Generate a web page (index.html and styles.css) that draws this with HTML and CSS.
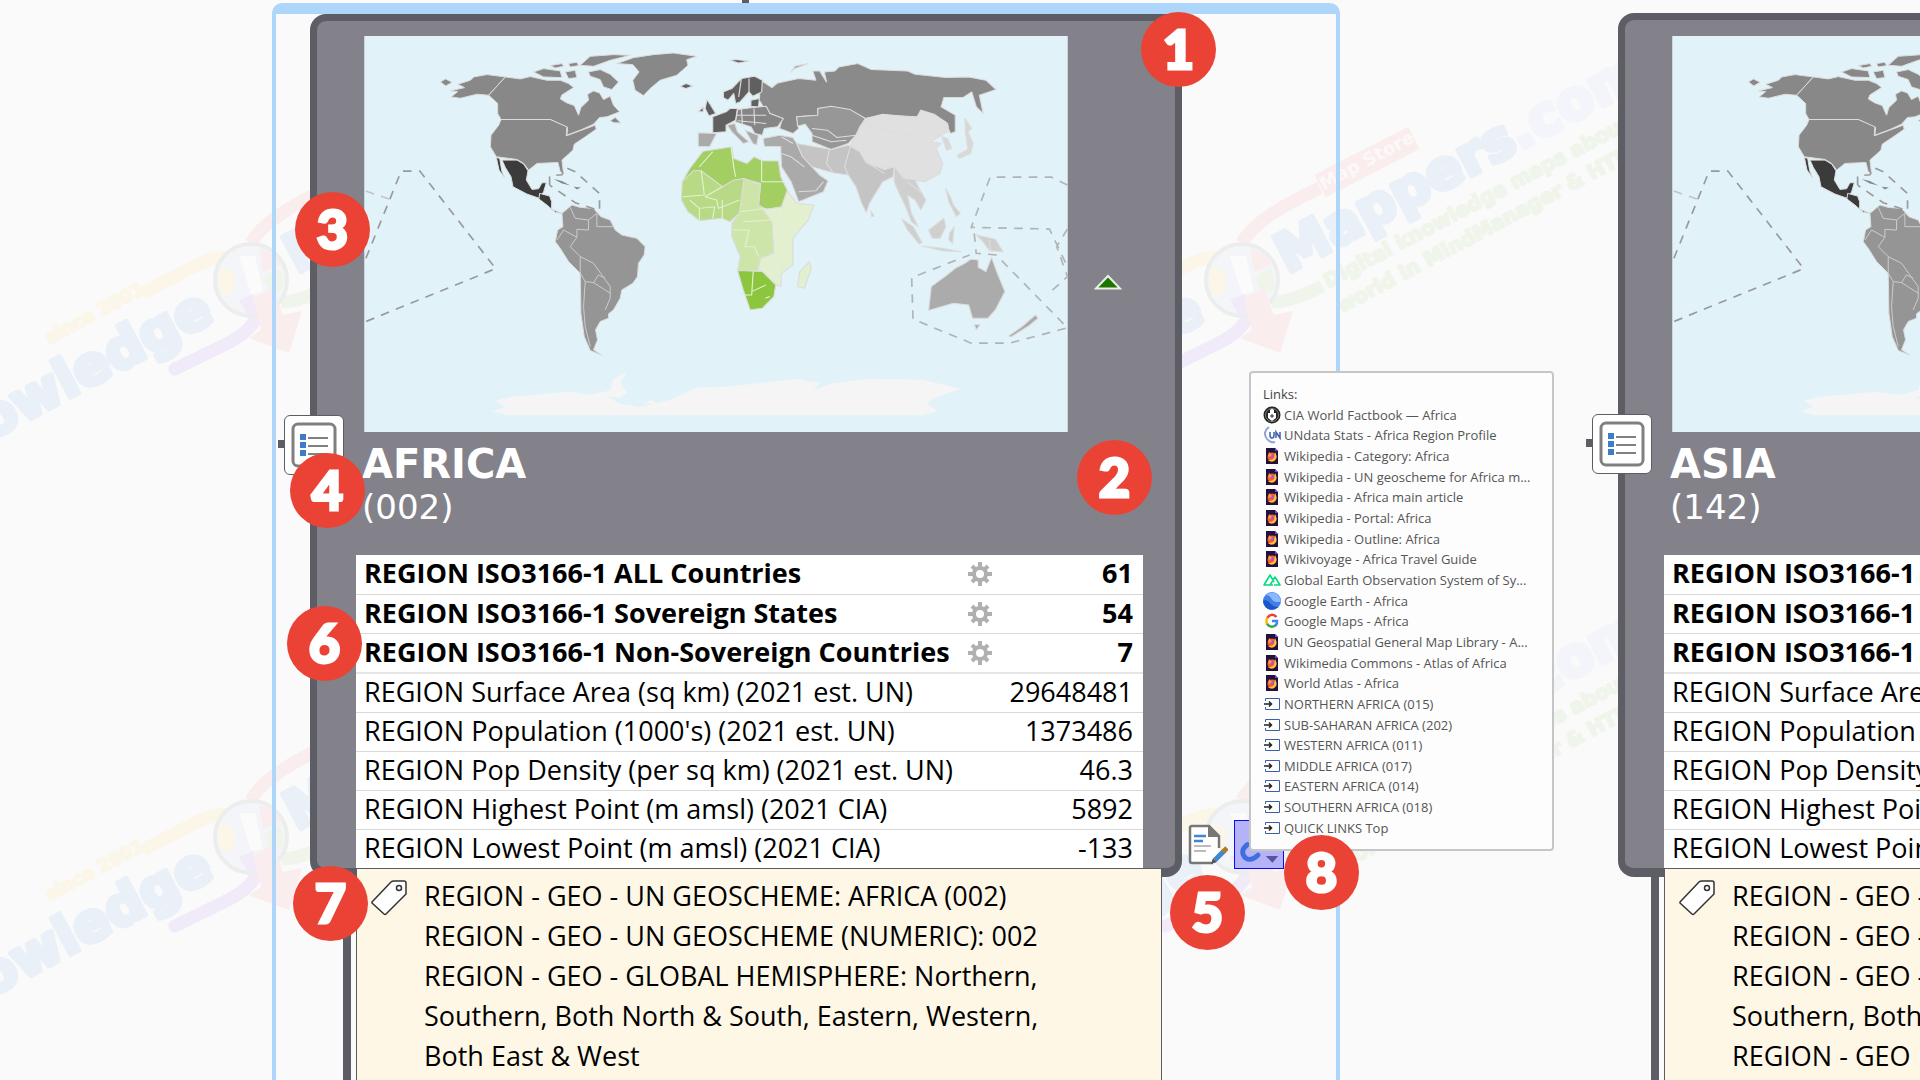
FILE: index.html
```html
<!DOCTYPE html>
<html lang="en">
<head>
<meta charset="utf-8">
<title>World Regions</title>
<link rel="stylesheet" href="styles.css">
</head>
<body>
<svg class="defs" aria-hidden="true">
  <symbol id="worldmap" viewBox="311 107 2114 1190">
    <rect x="311" y="107" width="2114" height="1190" fill="#e1f2f9"/>
    <g stroke="#dcdcdc" stroke-width="3" stroke-linejoin="round">
      <path fill="#f5f5f5" stroke="none" d="M695 1235L735 1222 705 1202 760 1190 850 1183 925 1176 990 1185 1050 1172 1058 1140 1100 1115 1080 1150 1102 1180 1080 1195 1040 1190 1080 1212 1140 1222 1230 1200 1312 1163 1404 1160 1530 1146 1611 1137 1680 1150 1660 1172 1720 1150 1829 1137 1990 1140 2104 1167 2024 1195 2001 1212 2035 1235 1990 1247 740 1247ZM1150 1212L1175 1200 1190 1212Z"/>
      <g fill="#888">
        <path d="M572 290L592 274 570 272 612 262 592 252 630 240 640 230 680 223 735 230 685 285 650 282 600 294ZM540 245L555 236 575 246 556 257Z"/>
        <path d="M735 230L780 236 810 229 860 240 900 240 925 250 940 262 905 284 900 296 920 308 942 316 955 345 962 322 985 300 982 282 1000 272 1018 278 1030 298 1050 288 1060 315 1078 335 1040 350 1018 352 1000 372 965 388 920 405 922 382 870 358 722 358 712 340 712 310 685 285Z"/>
        <path d="M722 358L870 358 920 380 918 407 1005 375 1008 387 975 410 942 432 938 450 905 480 910 522 900 515 893 487 830 490 805 510 790 490 770 478 708 470 690 440 692 405 715 375Z"/>
        <path d="M1070 190L1120 172 1180 163 1240 158 1310 168 1280 178 1284 195 1250 225 1200 240 1170 265 1150 286 1125 270 1118 240 1137 215 1118 193Z"/>
        <path d="M820 215L850 205 900 212 905 232 850 230ZM915 215L945 210 950 232 925 235ZM960 195L990 168 1060 163 1110 165 1050 180 1000 198ZM985 215L1020 208 1050 222 1075 245 1055 268 1030 260 1020 238 990 228ZM870 196L905 190 910 198 885 203ZM925 190L950 186 955 196 930 200ZM1050 362L1065 352 1082 368 1062 368Z"/>
      </g>
      <g fill="#3b3b3b">
        <path d="M725 480L770 480 790 492 803 512 798 540 815 568 835 566 845 548 858 548 850 575 838 595 800 582 758 560 752 530 735 502Z"/>
        <path d="M708 472L718 475 724 512 732 532 716 510ZM838 580L868 588 874 605 874 628 905 640 885 637 860 615 836 597Z"/>
      </g>
      <path fill="#959595" d="M905 640L935 615 960 622 1000 625 1022 650 1050 660 1065 690 1085 705 1130 715 1155 740 1152 765 1135 790 1132 830 1118 850 1085 870 1080 895 1060 930 1045 942 1045 955 1020 965 1006 990 1012 1020 1000 1050 1025 1066 990 1052 972 1010 962 940 960 820 925 785 900 745 885 725 892 690 908 680Z"/>
      <path fill="none" stroke="#ccc" d="M930 622L945 655 985 660 985 690 950 688 950 712 910 690M950 712L930 740 960 770 1000 790 1025 825 1050 860 1050 895 1035 930M960 770L960 820 975 845 970 920 975 980 990 1040M975 845L1000 848 1015 825 1035 835M1000 848L1050 880M910 690L890 720M985 660L1010 640 1010 680 1062 680"/>
      <path fill="#888" stroke="none" d="M880 537L905 543 930 556 905 550ZM940 560L962 562 950 568Z"/>
    </g>
    <g fill="none" stroke="#9a9a9a" stroke-width="5" stroke-dasharray="26 22">
      <path d="M316 775L422 513 478 513 706 806 316 965"/>
      <path d="M316 573L385 597" stroke="#c4c4c4"/>
      <path d="M868 555L868 527 905 524 915 502 945 515 1018 580 1018 632 945 608 868 555"/>
      <path stroke="#b3b3b3" d="M2424 555L2376 531 2192 531 2135 682 2370 687 2424 800M2144 700L2150 760 2210 765 2424 984 2250 1030 2135 1030 1960 958 1956 833 2130 765M2424 687L2392 740 2424 830 2364 884"/>
    </g>
    <g transform="translate(1140 0) scale(1.148 1)" stroke="#dcdcdc" stroke-width="3" stroke-linejoin="round">
      <path fill="#8a8a8a" d="M315 240L345 262 360 248 415 235 460 240 452 212 470 212 488 245 482 215 510 212 520 200 570 190 605 208 700 212 720 222 800 232 860 230 905 240 932 268 888 285 898 340 880 320 868 275 845 292 795 292 788 320 825 345 825 395 812 400 800 365 765 345 735 330 725 350 635 345 590 355 500 320 465 325 465 345 410 350 415 385 400 400 365 385 372 355 330 335 312 300Z"/>
      <path fill="#979797" d="M410 350L465 345 465 325 500 318 550 328 590 355 575 380 565 405 545 430 500 448 450 425 450 400 432 372 412 378Z"/>
      <path fill="#e0e0e0" d="M590 355L635 342 725 352 735 330 770 342 805 370 808 392 760 425 788 430 775 445 792 490 785 520 745 545 712 540 690 535 662 500 630 505 590 485 575 455 550 435 568 400Z"/>
      <path fill="#c4c4c4" d="M410 430L500 448 545 435 575 455 592 488 640 508 665 500 662 530 635 545 600 610 592 638 580 610 565 560 545 525 505 518 480 510 435 495 420 460ZM604 632L612 648 606 650Z"/>
      <path fill="#cfcfcf" d="M665 500L690 535 720 540 735 575 748 600 735 630 720 600 700 585 710 640 728 680 710 665 695 620 680 585 665 545ZM685 657L715 680 738 728 730 732 700 690ZM755 690L795 655 800 680 785 715 765 715ZM738 738L790 745 840 755 790 752ZM810 700L822 680 818 730 808 720ZM800 565L812 590 820 615 838 640 828 650 808 605ZM880 705L930 718 950 755 915 752 895 722Z"/>
      <path fill="#d8d8d8" d="M850 355L868 385 858 395 872 430 865 460 835 475 830 465 858 448 852 400ZM790 410L805 415 815 445 802 450Z"/>
      <path fill="#aaa" d="M322 415L365 405 400 412 410 430 425 470 470 525 492 542 480 575 415 605 395 545 370 500 368 440 325 438ZM152 398L200 400 182 440 152 438Z"/>
      <path fill="#606060" d="M218 275L240 265 265 235 300 228 320 240 318 275 295 288 285 275 262 305 250 310 245 280 230 300 218 292ZM105 258L120 250 138 257 120 265ZM175 298L185 315 198 340 180 347 170 325ZM152 335L165 320 165 335ZM290 300L312 295 310 320 290 318ZM190 350L225 335 235 325 255 325 250 360 225 375 225 395 190 398ZM235 180L250 178 285 182 258 188Z"/>
      <path fill="#868686" d="M255 328L295 322 330 318 340 340 375 355 360 380 325 385 320 405 300 400 290 380 250 365Z"/>
      <path fill="#aaa" d="M228 375L248 370 255 395 285 425 270 430 240 395ZM275 390L310 405 305 435 295 430ZM395 215L405 197 440 190 405 205Z"/>
      <path fill="none" stroke="#ddd" d="M590 375L640 390 700 405 735 375M265 235L258 290M285 235L285 275M265 325L268 375M298 325L300 375M450 385L490 390 515 412 565 405M450 405L500 425 540 420M495 450L488 490 505 518M550 440L535 500 545 525M370 460L395 470 430 500M415 575L460 572 480 545M590 485L640 520M700 545L740 580M915 720L917 752M370 410L400 430M252 345L330 345M255 362L330 370"/>
      <path fill="#a3cf62" d="M165 453L240 440 245 475 280 490 298 470 320 482 362 483 368 530 386 572 370 620 330 628 310 615 315 550 270 535 215 560 160 512 140 512 110 545 130 505 150 475Z"/>
      <path fill="#b8da87" d="M110 545L140 512 160 512 215 560 245 540 272 535 270 600 260 640 235 665 215 655 155 662 125 635 108 600Z"/>
      <path fill="#cde5a9" d="M272 535L315 555 310 615 325 628 350 665 350 760 315 775 308 812 255 812 262 770 240 710 240 670 260 640Z"/>
      <path fill="#e3f0d0" d="M385 572L410 610 455 615 440 660 400 715 400 795 370 820 368 860 350 850 320 815 308 812 315 775 350 760 345 665 320 628 370 622ZM443 785L448 805 430 865 412 860 418 815Z"/>
      <path fill="#8bc63e" d="M255 812L320 815 355 855 350 890 320 925 288 930 270 870Z"/>
      <path fill="none" stroke="#e4f2cf" d="M155 500L190 455M238 440L245 500 250 530M318 482L318 545 380 545M160 512L168 585 112 590M215 560L170 590 200 600 205 625 260 600M130 600L155 625 195 620 190 655M155 625L155 660M215 600L215 655M262 635L330 625M270 665L345 660M245 690L285 690 275 740 300 740 310 770M365 625L375 670 435 660M350 700L400 715M350 740L395 760M318 780L365 790 345 830M296 815L292 885 270 885M292 875L330 855M340 890L328 895"/>
      <path fill="#ababab" d="M762 860L800 828 825 805 850 790 865 778 885 780 885 802 905 815 920 772 935 820 955 875 930 930 910 955 870 955 860 915 820 910 755 932ZM875 975L890 975 880 990ZM965 1008L1000 980 1035 945 1042 955 1015 980 970 1012Z"/>
    </g>
  </symbol>
  <symbol id="gear" viewBox="0 0 26 26">
    <g stroke="#b0b0b0" fill="none"><circle cx="13" cy="13" r="6" stroke-width="4"/>
    <path stroke-width="4" d="M13 1V6M13 20V25M1 13H6M20 13H25M5 5L8 8M18 18L21 21M21 5L18 8M5 21L8 18"/></g>
  </symbol>
  <symbol id="outline" viewBox="0 0 46 46">
    <rect x="2" y="2" width="42" height="42" rx="5" fill="#fff" stroke="#808080" stroke-width="3"/>
    <path stroke="#808080" stroke-width="2" d="M17 16H37M17 24H37M17 32H37"/>
    <path fill="#3c7cc9" d="M9 12h6v6H9zM9 20h6v6H9zM9 28h6v6H9z"/>
  </symbol>
  <symbol id="tag" viewBox="0 0 36 36">
    <path fill="#fff" stroke="#333" stroke-width="1.5" stroke-linejoin="round" d="M1 22L20 2Q21 1 23 1H33Q35 1 35 3V14L15 34Q14 35 13 34L1 23Z"/>
    <circle cx="28" cy="8" r="2.5" fill="#fff" stroke="#333" stroke-width="1.5"/>
  </symbol>
  <symbol id="firefox" viewBox="0 0 18 18">
    <path fill="#20123a" d="M3 1H12L15 4V17H3Z"/><path fill="#7542e5" d="M12 1L15 4H12Z"/>
    <circle cx="9" cy="10" r="4.500" fill="#ff5a2a"/><path fill="#ffc533" d="M12 5Q15 10 12 13 9 16 5 13 10 13 11 11Z"/><circle cx="9" cy="9" r="1.800" fill="#9059ff"/><path fill="#ff9640" d="M5 9L6 5 9 8 7 10Z"/>
  </symbol>
  <symbol id="jump" viewBox="0 0 18 18">
    <path fill="none" stroke="#3a5fa8" d="M2.500 6V3.500H16.500V14.500H2.500V12"/><path fill="none" stroke="#222" stroke-width="1.500" d="M1 9H8M6 6.500L8.500 9 6 11.500"/>
  </symbol>
  <symbol id="cia" viewBox="0 0 18 18">
    <circle cx="9" cy="9" r="8.500" fill="#222"/><circle cx="9" cy="9" r="6.500" fill="none" stroke="#aaa" stroke-width=".7"/><path fill="#fff" d="M5 7H7V4Q9 2 11 4V7H13V12L9 15 5 12Z"/><path stroke="#333" d="M9 8V12M7 10H11"/>
  </symbol>
  <symbol id="un" viewBox="0 0 18 18">
    <path fill="none" stroke="#8fa3d4" stroke-width="2" d="M6 1Q-1 6 4 13 7 17 12 16"/><path fill="none" stroke="#3d5fae" stroke-width="1.500" d="M7 6V9Q7 12 9 12T11 9V6M13 12V6L17 12V6"/>
  </symbol>
  <symbol id="geoss" viewBox="0 0 18 18">
    <path fill="none" stroke="#00dc82" stroke-width="1.600" stroke-linejoin="round" d="M10 14H1L7 4 11 11M7 14L12 6 17 14H11"/>
  </symbol>
  <symbol id="earth" viewBox="0 0 18 18">
    <circle cx="9" cy="9" r="9" fill="#3f7fe8"/><path fill="#8ab8fa" d="M2 4Q6 2 8 6T14 10 18 9Q17 5 14 2 8-2 2 4Z"/><path fill="#1a56c8" d="M0 9Q4 7 7 11T15 15Q11 19 5 17 1 15 0 9Z"/>
  </symbol>
  <symbol id="google" viewBox="0 0 18 18">
    <g fill="none" stroke-width="2.500"><path stroke="#ea4335" d="M4 6Q9 0 13.500 5"/><path stroke="#fbbc05" d="M4.300 5.500Q2.500 9 4.300 12.300"/><path stroke="#34a853" d="M4 12Q8 17 13 13"/><path stroke="#4285f4" d="M9 9H14Q14.500 11.500 12.500 13.500"/></g>
  </symbol>
  <symbol id="brand" viewBox="-380 -260 920 420">
    <g fill="none" stroke-width="13">
      <path stroke="#fbf6e8" d="M-108 13L-60-12Q-40-23-24-23"/>
      <path stroke="#f1eaf8" stroke-linecap="round" d="M-76 89L-27 65Q0 52 6 36"/>
      <path stroke="#f0f5eb" d="M30 22Q50 22 80 6"/>
      <path stroke="#faeded" d="M0-37Q14-63 78-92"/>
      <path stroke="#faeded" stroke-width="25" stroke-linejoin="round" d="M78-94L172-142"/>
    </g>
    <circle r="36" fill="#f4f5f9" stroke="#eceeed" stroke-width="4"/>
    <path fill="#fbf6e8" d="M-31-12Q-22-14-16-4L-18 12-28 16Q-36 0-31-12Z"/>
    <path fill="#faeded" d="M8-32Q24-28 30-16L12-8Z"/><path fill="#f0f5eb" d="M12-2L28-12Q36 4 30 12L18 10Z"/><path fill="#f1eaf8" d="M-12 20L2 14 8 33-4 34Z"/>
    <path fill="#fbfbfc" d="M-12-24H4L12 12 0 14Z"/>
    <path fill="#faeded" d="M2 18L22 8 32 35 51 31 38 73-2 58 10 50Z"/>
    <g transform="rotate(-28)" class="brand-text">
      <text class="brand-big" x="-50" y="19" text-anchor="end">Knowledge</text>
      <text class="brand-big" x="43" y="16">Mappers<tspan class="brand-dotcom">.com</tspan></text>
      <text class="brand-small brand-since" x="-208" y="-38">since 2001</text>
      <text class="brand-small brand-tagline" x="72" y="48">Digital knowledge maps about the</text>
      <text class="brand-small brand-tagline" x="72" y="76">world in MindManager &amp; HTML</text>
      <text class="brand-small brand-store" x="114" y="-41">Map Store</text>
    </g>
  </symbol>
</svg>

<main class="canvas">
  <svg class="watermark watermark-a"><use href="#brand"/></svg>
  <svg class="watermark watermark-b"><use href="#brand"/></svg>
  <svg class="watermark watermark-c"><use href="#brand"/></svg>
  <svg class="watermark watermark-d"><use href="#brand"/></svg>

  <div class="trunk"></div>
  <div class="selection"></div>

  <article class="topic topic-africa">
    <button class="outline-button" aria-label="Show outline"><svg><use href="#outline"/></svg></button>
    <div class="topic-body">
      <div class="picture-row">
        <svg class="map" role="img" aria-label="World map with Africa highlighted"><use href="#worldmap"/></svg>
        <svg class="marker" viewBox="0 0 30 16"><path fill="#1f7300" stroke="#e8f2e6" stroke-width="2" d="M3 14.500L15 2 27 14.500Z"/></svg>
      </div>
      <header class="heading"><h1>AFRICA</h1><p>(002)</p></header>
      <table class="facts">
        <tr class="strong"><th>REGION ISO3166-1 ALL Countries</th><td class="tool"><svg><use href="#gear"/></svg></td><td>61</td></tr>
        <tr class="strong"><th>REGION ISO3166-1 Sovereign States</th><td class="tool"><svg><use href="#gear"/></svg></td><td>54</td></tr>
        <tr class="strong"><th>REGION ISO3166-1 Non-Sovereign Countries</th><td class="tool"><svg><use href="#gear"/></svg></td><td>7</td></tr>
        <tr><th colspan="2">REGION Surface Area (sq km) (2021 est. UN)</th><td>29648481</td></tr>
        <tr><th colspan="2">REGION Population (1000's) (2021 est. UN)</th><td>1373486</td></tr>
        <tr><th colspan="2">REGION Pop Density (per sq km) (2021 est. UN)</th><td>46.3</td></tr>
        <tr><th colspan="2">REGION Highest Point (m amsl) (2021 CIA)</th><td>5892</td></tr>
        <tr><th colspan="2">REGION Lowest Point (m amsl) (2021 CIA)</th><td>-133</td></tr>
      </table>
    </div>
    <section class="tags">
      <svg class="tag-icon"><use href="#tag"/></svg>
      <ul>
        <li>REGION - GEO - UN GEOSCHEME: AFRICA (002)</li>
        <li>REGION - GEO - UN GEOSCHEME (NUMERIC): 002</li>
        <li>REGION - GEO - GLOBAL HEMISPHERE: Northern, Southern, Both North &amp; South, Eastern, Western, Both East &amp; West</li>
      </ul>
    </section>
  </article>

  <article class="topic topic-asia">
    <button class="outline-button" aria-label="Show outline"><svg><use href="#outline"/></svg></button>
    <div class="topic-body">
      <div class="picture-row">
        <svg class="map" role="img" aria-label="World map"><use href="#worldmap"/></svg>
      </div>
      <header class="heading"><h1>ASIA</h1><p>(142)</p></header>
      <table class="facts">
        <tr class="strong"><th>REGION ISO3166-1 ALL Countries</th></tr>
        <tr class="strong"><th>REGION ISO3166-1 Sovereign States</th></tr>
        <tr class="strong"><th>REGION ISO3166-1 Non-Sovereign Countries</th></tr>
        <tr><th>REGION Surface Area (sq km) (2021 est. UN)</th></tr>
        <tr><th>REGION Population (1000's) (2021 est. UN)</th></tr>
        <tr><th>REGION Pop Density (per sq km) (2021 est. UN)</th></tr>
        <tr><th>REGION Highest Point (m amsl) (2021 CIA)</th></tr>
        <tr><th>REGION Lowest Point (m amsl) (2021 CIA)</th></tr>
      </table>
    </div>
    <section class="tags">
      <svg class="tag-icon"><use href="#tag"/></svg>
      <ul>
        <li>REGION - GEO - UN GEOSCHEME: ASIA (142)</li>
        <li>REGION - GEO - UN GEOSCHEME (NUMERIC): 142</li>
        <li>REGION - GEO - GLOBAL HEMISPHERE: Northern, Southern, Both North &amp; South, Eastern</li>
        <li>REGION - GEO</li>
      </ul>
    </section>
  </article>

  <div class="topic-tools">
    <button class="note-button" aria-label="Notes">
      <svg viewBox="0 0 40 42"><path fill="#fff" stroke="#777" stroke-width="2.500" d="M31 24V12L21 2H4Q2 2 2 4V37Q2 39 4 39H25"/><path fill="#777" d="M20 1L32 13H20Z"/><path stroke="#3f87d0" stroke-width="2.500" d="M6 12H18M6 17H15"/><path stroke="#bbb" stroke-width="2" d="M6 22H23M6 27H18"/><path stroke="#3f87d0" stroke-width="5" d="M27 36L36 27"/><path fill="#555" d="M23 40L25 34 29 38Z"/><path stroke="#b07a2c" stroke-width="5" d="M35 28L39 24"/></svg>
    </button>
    <button class="link-button" aria-label="Links">
      <svg viewBox="0 0 50 48"><path fill="none" stroke="#3d6fe0" stroke-width="5" stroke-linecap="round" d="M13 24Q4 31 11 38 17 42 24 35M17 20Q25 12 32 18"/><path fill="#5b52a0" d="M32 36H45L39 43Z"/></svg>
    </button>
  </div>

  <aside class="links">
    <h2>Links:</h2>
    <a href="#"><svg><use href="#cia"/></svg>CIA World Factbook — Africa</a>
    <a href="#"><svg><use href="#un"/></svg>UNdata Stats - Africa Region Profile</a>
    <a href="#"><svg><use href="#firefox"/></svg>Wikipedia - Category: Africa</a>
    <a href="#"><svg><use href="#firefox"/></svg>Wikipedia - UN geoscheme for Africa m...</a>
    <a href="#"><svg><use href="#firefox"/></svg>Wikipedia - Africa main article</a>
    <a href="#"><svg><use href="#firefox"/></svg>Wikipedia - Portal: Africa</a>
    <a href="#"><svg><use href="#firefox"/></svg>Wikipedia - Outline: Africa</a>
    <a href="#"><svg><use href="#firefox"/></svg>Wikivoyage - Africa Travel Guide</a>
    <a href="#"><svg><use href="#geoss"/></svg>Global Earth Observation System of Sy...</a>
    <a href="#"><svg><use href="#earth"/></svg>Google Earth - Africa</a>
    <a href="#"><svg><use href="#google"/></svg>Google Maps - Africa</a>
    <a href="#"><svg><use href="#firefox"/></svg>UN Geospatial General Map Library - A...</a>
    <a href="#"><svg><use href="#firefox"/></svg>Wikimedia Commons - Atlas of Africa</a>
    <a href="#"><svg><use href="#firefox"/></svg>World Atlas - Africa</a>
    <a href="#"><svg><use href="#jump"/></svg>NORTHERN AFRICA (015)</a>
    <a href="#"><svg><use href="#jump"/></svg>SUB-SAHARAN AFRICA (202)</a>
    <a href="#"><svg><use href="#jump"/></svg>WESTERN AFRICA (011)</a>
    <a href="#"><svg><use href="#jump"/></svg>MIDDLE AFRICA (017)</a>
    <a href="#"><svg><use href="#jump"/></svg>EASTERN AFRICA (014)</a>
    <a href="#"><svg><use href="#jump"/></svg>SOUTHERN AFRICA (018)</a>
    <a href="#"><svg><use href="#jump"/></svg>QUICK LINKS Top</a>
  </aside>

  <span class="badge badge-1">1</span>
  <span class="badge badge-2">2</span>
  <span class="badge badge-3">3</span>
  <span class="badge badge-4">4</span>
  <span class="badge badge-5">5</span>
  <span class="badge badge-6">6</span>
  <span class="badge badge-7">7</span>
  <span class="badge badge-8">8</span>
</main>
</body>
</html>
```
FILE: styles.css
```css
* { box-sizing: border-box; }

body {
  margin: 0;
  background: #fafafa;
  color: #000;
  font-family: "Open Sans", "Noto Sans", sans-serif;
}

h1, h2, p, ul { margin: 0; padding: 0; }
svg { display: block; }
button { padding: 0; cursor: pointer; }

.defs { position: absolute; width: 0; height: 0; }

.canvas {
  position: relative;
  height: 100vh;
  overflow: hidden;
}

/* Background branding */
.watermark { position: absolute; width: 920px; height: 420px; }
.watermark-a { left: -129px; top: 20px; }
.watermark-b { left: 862px; top: 20px; }
.watermark-c { left: -129px; top: 577px; }
.watermark-d { left: 862px; top: 577px; }
.brand-text { font-family: "DejaVu Sans", sans-serif; font-weight: 700; }
.brand-big { font-size: 54px; fill: #eaf0f8; stroke: #eaf0f8; stroke-width: 5px; stroke-linejoin: round; }
.brand-dotcom { fill: #f3f5fb; stroke: #f3f5fb; }
.brand-small { font-size: 20px; stroke-width: 2px; stroke-linejoin: round; }
.brand-since { font-size: 18px; fill: #fbf6e8; stroke: #fbf6e8; }
.brand-tagline { fill: #f0f5eb; stroke: #f0f5eb; }
.brand-store { font-size: 18px; fill: #fdf8f8; }

.trunk {
  position: absolute;
  left: 742px;
  top: 0;
  width: 7px;
  height: 3px;
  background: #5d5d66;
}

.selection {
  position: absolute;
  left: 272px;
  top: 3px;
  width: 1068px;
  bottom: -20px;
  border: 4px solid #aed6fb;
  border-top-width: 11px;
  border-radius: 10px;
}

/* Topic nodes */
.topic { position: absolute; top: 14px; width: 872px; }
.topic-africa { left: 310px; }
.topic-asia { left: 1618px; top: 13px; }
.topic-asia .topic-body { padding-top: 16px; }

.topic-body {
  border: 7px solid #5d5d66;
  border-bottom-width: 9px;
  border-radius: 16px;
  background: #83828b;
  padding: 15px 32px 0 39px;
}

.picture-row {
  display: flex;
  align-items: center;
  gap: 24px;
  padding-left: 7px;
}
.map { width: 706px; height: 396px; flex: none; }
.marker { width: 30px; height: 16px; margin-top: 96px; }

.heading {
  height: 123px;
  padding: 10px 0 0 6px;
  color: #fff;
  font-family: "DejaVu Sans", Verdana, sans-serif;
}
.heading h1 { font-size: 40px; line-height: 44px; }
.heading p { font-size: 34px; line-height: 42px; }

.facts {
  width: 100%;
  background: #fff;
  border-collapse: collapse;
  font-size: 27px;
  line-height: 36px;
}
.facts tr { height: 39px; border-bottom: 1px solid #d9d9d9; }
.facts tr:nth-child(3) { border-bottom: 2px solid #e6e6e6; }
.facts tr:last-child { border-bottom: 0; }
.facts th, .facts td { padding: 0 10px 2px 8px; font-weight: 400; white-space: nowrap; }
.facts th { text-align: left; }
.facts td { text-align: right; }
.facts .strong th, .facts .strong td { font-weight: 700; }
.facts .tool { width: 26px; padding: 0; }
.facts td:last-child { width: 150px; }
.tool svg { width: 26px; height: 26px; }

.tags {
  position: relative;
  display: flex;
  gap: 17px;
  margin: -9px 20px 0 46px;
  padding: 7px 78px 60px 14px;
  border: 1px solid #5d5d66;
  background: #fff7e6;
  font-size: 27px;
  line-height: 40px;
}
.tags::before {
  content: "";
  position: absolute;
  left: -14px;
  top: 8px;
  bottom: 0;
  width: 8px;
  background: #5d5d66;
}
.tag-icon { width: 36px; height: 36px; margin-top: 4px; flex: none; }
.tags ul { list-style: none; }

.outline-button {
  position: absolute;
  left: -26px;
  top: 401px;
  width: 60px;
  height: 60px;
  display: grid;
  place-items: center;
  border: 1px solid #5d5d66;
  border-radius: 6px;
  background: #fff;
}
.outline-button svg { width: 46px; height: 46px; }
.outline-button::before {
  content: "";
  position: absolute;
  left: -7px;
  top: 24px;
  width: 6px;
  height: 8px;
  background: #5d5d66;
}

.topic-tools {
  position: absolute;
  left: 1188px;
  top: 820px;
  display: flex;
  align-items: center;
  gap: 6px;
}
.note-button { border: 0; background: none; }
.note-button svg { width: 40px; height: 42px; }
.link-button { border: 1px solid #0a0aff; background: #b5b3f7; }
.link-button svg { width: 48px; height: 47px; }

/* Links tooltip */
.links {
  position: absolute;
  left: 1249px;
  top: 371px;
  width: 305px;
  height: 480px;
  display: flex;
  flex-direction: column;
  justify-content: space-between;
  padding: 11px 12px;
  border: 2px solid #c6c6c6;
  border-radius: 4px;
  background: #fdfdfd;
  color: #555;
  font-size: 13px;
  line-height: 20px;
}
.links h2 { font-size: 13px; font-weight: 400; color: #444; }
.links a {
  display: flex;
  align-items: center;
  gap: 3px;
  color: inherit;
  text-decoration: none;
  white-space: nowrap;
}
.links svg { width: 18px; height: 18px; flex: none; }

/* Numbered callouts */
.badge {
  position: absolute;
  width: 75px;
  height: 75px;
  display: grid;
  place-items: center;
  border-radius: 50%;
  background: #ea4335;
  color: #fff;
  font: 900 54px/73px Lato, sans-serif;
  padding-bottom: 2px;
  -webkit-text-stroke: 3px #fff;
}
.badge-1 { left: 1141px; top: 12px; }
.badge-2 { left: 1077px; top: 440px; }
.badge-3 { left: 295px; top: 192px; }
.badge-4 { left: 290px; top: 453px; }
.badge-5 { left: 1170px; top: 875px; }
.badge-6 { left: 287px; top: 606px; }
.badge-7 { left: 293px; top: 866px; }
.badge-8 { left: 1284px; top: 835px; }
```
